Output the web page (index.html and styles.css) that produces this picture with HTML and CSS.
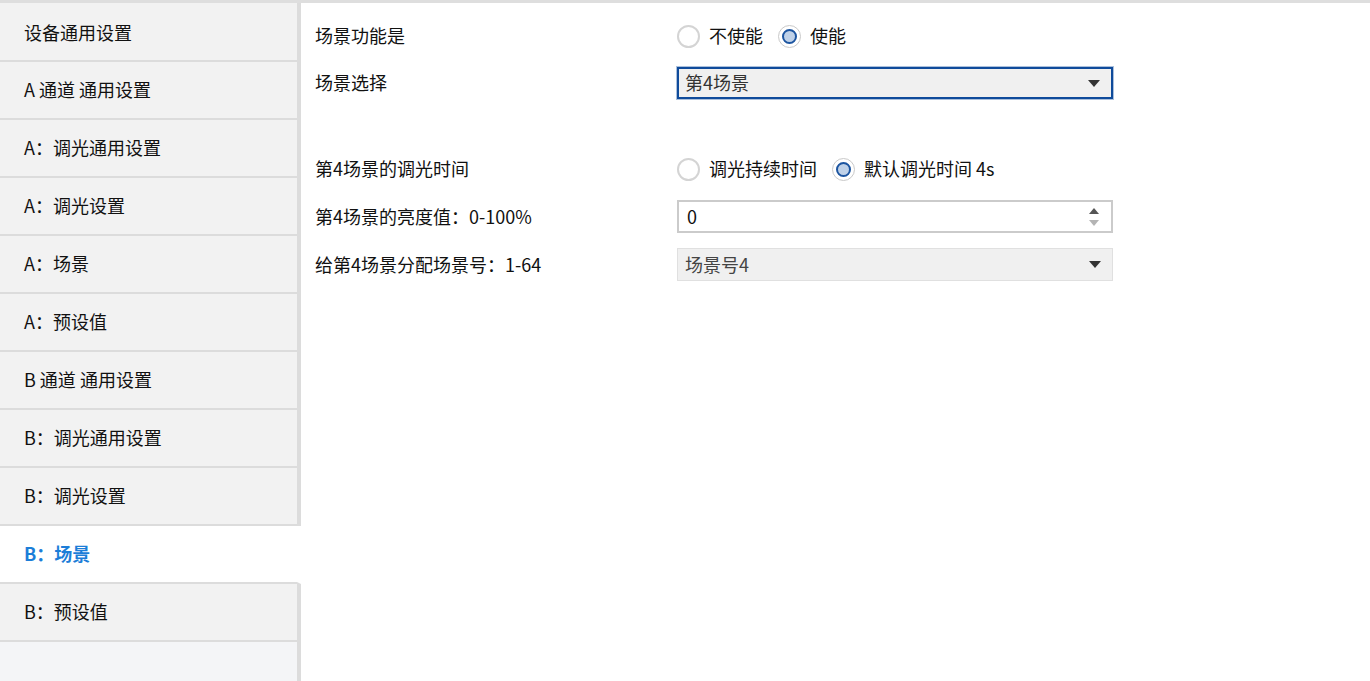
FILE: index.html
```html
<!DOCTYPE html>
<html lang="zh-CN">
<head>
  <meta charset="UTF-8">
  <meta name="viewport" content="width=device-width, initial-scale=1">
  <title>场景设置</title>
  <link rel="stylesheet" href="styles.css">
</head>
<body>
  <div class="page">
    <nav class="side-nav">
      <div class="nav-item first">设备通用设置</div>
      <div class="nav-item">A 通道 通用设置</div>
      <div class="nav-item">A：调光通用设置</div>
      <div class="nav-item">A：调光设置</div>
      <div class="nav-item">A：场景</div>
      <div class="nav-item">A：预设值</div>
      <div class="nav-item">B 通道 通用设置</div>
      <div class="nav-item">B：调光通用设置</div>
      <div class="nav-item">B：调光设置</div>
      <div class="nav-item active">B：场景</div>
      <div class="nav-item">B：预设值</div>
      <div class="nav-fill"></div>
    </nav>

    <main class="settings">
      <div class="row">
        <div class="row-label">场景功能是</div>
        <div class="radio-group">
          <label class="radio"><span class="dot"></span>不使能</label>
          <label class="radio checked"><span class="dot"></span>使能</label>
        </div>
      </div>

      <div class="row">
        <div class="row-label">场景选择</div>
        <div class="select focused">
          <span>第4场景</span>
          <svg class="caret" width="12" height="7" viewBox="0 0 12 7"><path d="M0 0h12L6 7z"/></svg>
        </div>
      </div>

      <div class="row spaced">
        <div class="row-label">第4场景的调光时间</div>
        <div class="radio-group">
          <label class="radio"><span class="dot"></span>调光持续时间</label>
          <label class="radio checked"><span class="dot"></span>默认调光时间 4s</label>
        </div>
      </div>

      <div class="row">
        <div class="row-label">第4场景的亮度值：0-100%</div>
        <div class="number-box">
          <span>0</span>
          <div class="spin">
            <svg width="10" height="6" viewBox="0 0 10 6"><path d="M5 0l5 6H0z" fill="#555"/></svg>
            <svg width="10" height="6" viewBox="0 0 10 6"><path d="M0 0h10L5 6z" fill="#b4b4b4"/></svg>
          </div>
        </div>
      </div>

      <div class="row">
        <div class="row-label">给第4场景分配场景号：1-64</div>
        <div class="select disabled">
          <span>场景号4</span>
          <svg class="caret" width="12" height="7" viewBox="0 0 12 7"><path d="M0 0h12L6 7z"/></svg>
        </div>
      </div>
    </main>
  </div>
</body>
</html>
```

FILE: styles.css
```css
*, *::before, *::after { box-sizing: border-box; }
html, body { height: 100%; }
body { margin: 0; font-family: "Noto Sans CJK SC", "Noto Sans", sans-serif; font-size: 18px; color: #111; background: #fff; }

.page { display: flex; height: 100%; border-top: 3px solid #dedede; }

.side-nav { width: 301px; display: flex; flex-direction: column; flex-shrink: 0; }
.nav-item { height: 58px; display: flex; align-items: center; padding-left: 24px; background: #f2f2f2; border-bottom: 2px solid #dcdcdc; border-right: 4px solid #dcdcdc; line-height: 1.2; }
.nav-item.first { height: 59px; padding-top: 2px; }
.nav-item.active { background: #fff; border-right-color: #fff; color: #1c7ed8; font-weight: bold; }
.nav-fill { flex: 1; background: #f4f5f7; border-right: 4px solid #dcdcdc; }

.settings { flex: 1; padding: 17px 0 0 14px; display: flex; flex-direction: column; gap: 15px; }
.row { display: flex; align-items: center; min-height: 32px; }
.row.spaced { margin-top: 39px; }
.row-label { width: 362px; line-height: 1.2; }

.radio-group { display: flex; align-items: center; gap: 15px; }
.radio { display: flex; align-items: center; gap: 9px; line-height: 1.2; cursor: pointer; }
.dot { width: 23px; height: 23px; border-radius: 50%; border: 2px solid #d4d4d4; background: #fff; display: flex; align-items: center; justify-content: center; }
.radio.checked .dot { border-width: 1.5px; border-color: #c9c9c9; }
.radio.checked .dot::before { content: ''; width: 15px; height: 15px; border-radius: 50%; background: #bfd1e8; border: 2px solid #1d55a0; }

.select { width: 436px; height: 33px; display: flex; align-items: center; justify-content: space-between; padding: 0 11px 0 7px; background: #f0f0f0; color: #333; line-height: 1.2; }
.select.focused { border: 2px solid #0f4b9b; box-shadow: 0 0 0 1px rgba(15, 75, 155, 0.35); height: 32px; padding-left: 6px; }
.select.disabled { border: 1px solid #e0e0e0; color: #444; }
.caret { fill: #333; }

.number-box { width: 436px; height: 33px; display: flex; align-items: center; justify-content: space-between; padding: 0 12px 0 8px; border: 2px solid #cbcbcb; background: #fff; line-height: 1.2; }
.spin { display: flex; flex-direction: column; gap: 6px; }
.spin svg { display: block; }
```
